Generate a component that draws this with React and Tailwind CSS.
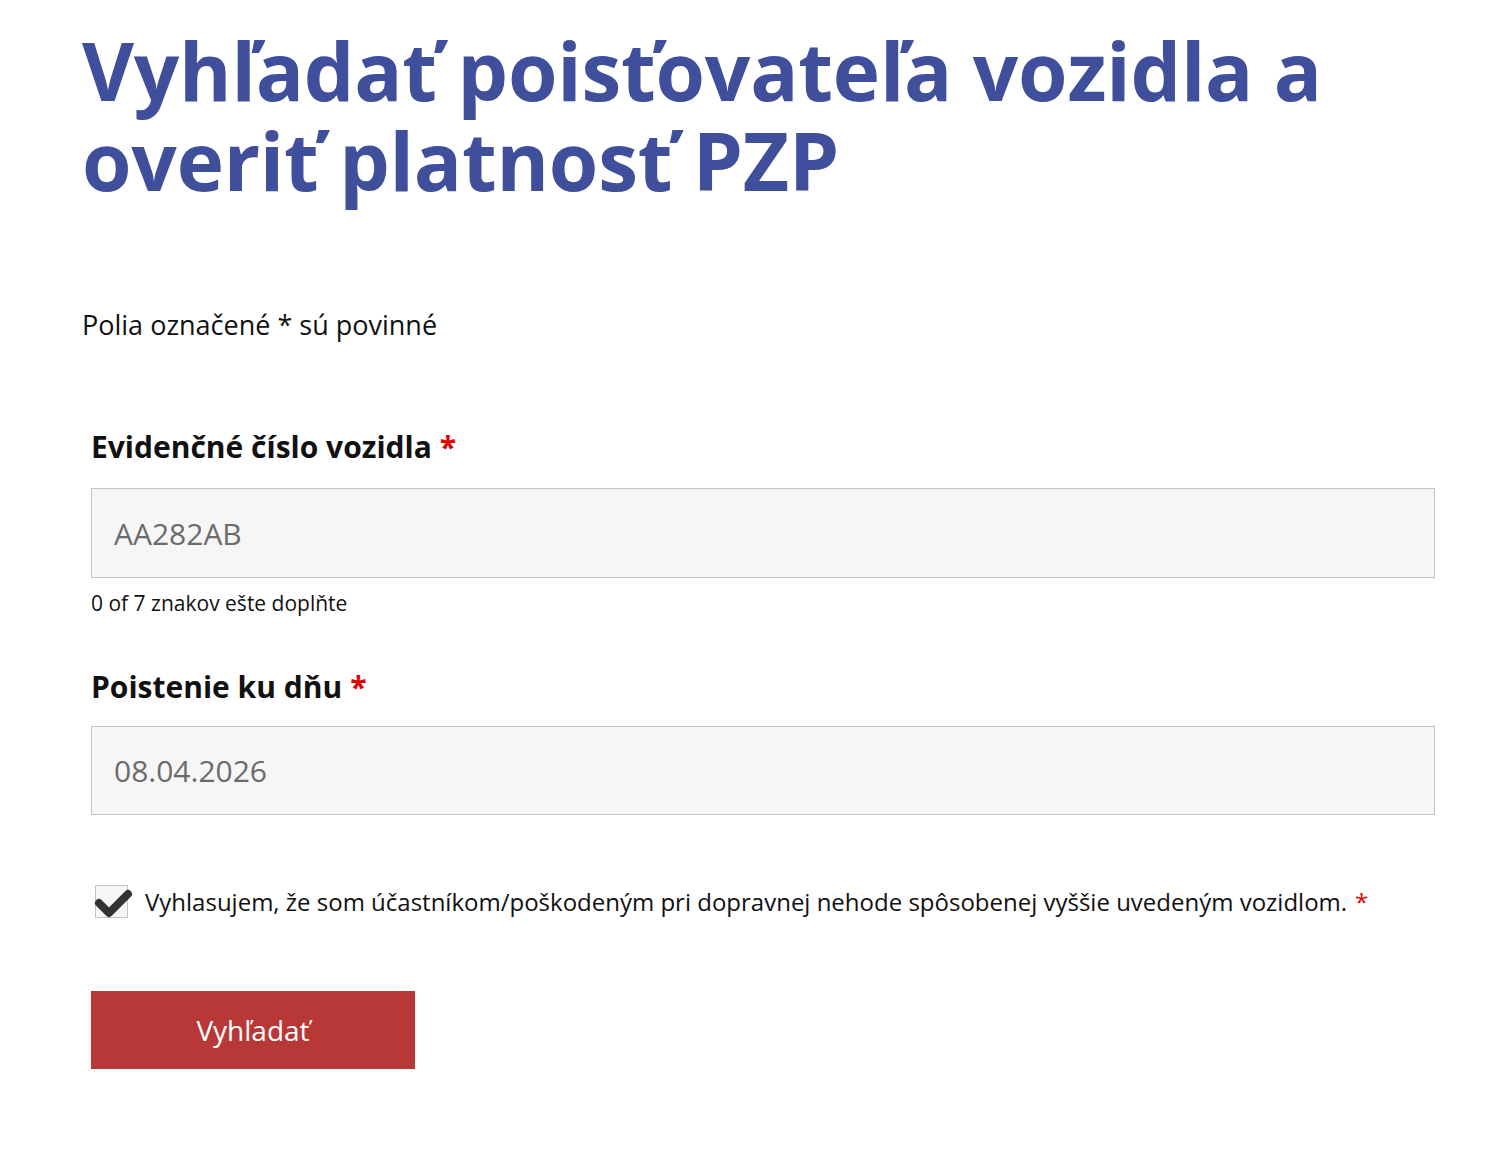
import React, { useState } from 'react';

const font = { fontFamily: '"Open Sans", "Noto Sans", sans-serif' };

function Req() {
  return <span className="text-[#e00000] ml-2">*</span>;
}

export default function App() {
  const [plate, setPlate] = useState('');
  const [date, setDate] = useState('');
  const [agree, setAgree] = useState(true);

  return (
    <div className="min-h-screen bg-white text-[#111]" style={font}>
      <div className="pl-[82px] pr-[53px] pt-[25px] pb-20">
        <h1 className="text-[80px] leading-[90px] font-bold text-[#404f9c] tracking-[-0.2px]">
          Vyhľadať poisťovateľa vozidla a<br />overiť platnosť PZP
        </h1>

        <p className="mt-[104px] text-[27px] leading-8">Polia označené * sú povinné</p>

        <form className="mt-[88px] pl-[9px]" onSubmit={e => e.preventDefault()}>
          <label className="block text-[30px] font-bold leading-9">
            Evidenčné číslo vozidla<Req />
          </label>
          <input
            value={plate}
            onChange={e => setPlate(e.target.value)}
            placeholder="AA282AB"
            className="mt-[23px] block w-full h-[90px] bg-[#f6f6f6] border border-[#c4c4c4] px-[22px] text-[30px] placeholder:text-[#6b6b6b] outline-none"
          />
          <p className="mt-[13px] text-[21px] leading-6">0 of 7 znakov ešte doplňte</p>

          <label className="block mt-[54px] text-[30px] font-bold leading-9">
            Poistenie ku dňu<Req />
          </label>
          <input
            value={date}
            onChange={e => setDate(e.target.value)}
            placeholder="08.04.2026"
            className="mt-[21px] block w-full h-[89px] bg-[#f6f6f6] border border-[#c4c4c4] px-[22px] text-[30px] placeholder:text-[#6b6b6b] outline-none"
          />

          <label className="mt-[70px] flex items-center gap-[17px] cursor-pointer">
            <span className="relative w-[33px] h-[33px] ml-[4px] shrink-0 bg-[#f6f6f6] border border-[#c4c4c4]">
              <input
                type="checkbox"
                checked={agree}
                onChange={e => setAgree(e.target.checked)}
                className="sr-only"
              />
              {agree && (
                <svg viewBox="0 0 40 36" className="absolute left-[-1px] top-[-1px] w-[40px] h-[36px] overflow-visible">
                  <path d="M4 18 L14 28 L33 9" fill="none" stroke="#333" strokeWidth="8" strokeLinecap="round" strokeLinejoin="round" />
                </svg>
              )}
            </span>
            <span className="text-[24px] leading-8">
              Vyhlasujem, že som účastníkom/poškodeným pri dopravnej nehode spôsobenej vyššie uvedeným vozidlom.<Req />
            </span>
          </label>

          <button
            type="submit"
            className="mt-[73px] w-[324px] h-[78px] bg-[#b83838] text-white text-[28px]"
          >
            Vyhľadať
          </button>
        </form>
      </div>
    </div>
  );
}
